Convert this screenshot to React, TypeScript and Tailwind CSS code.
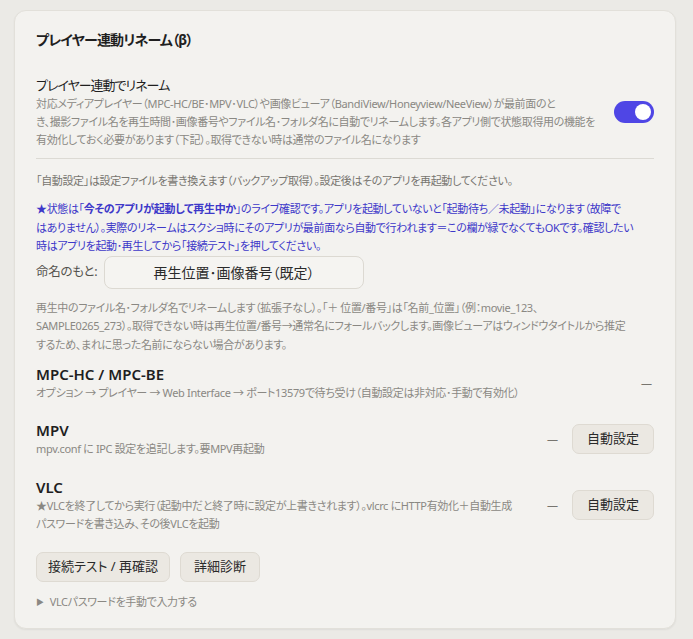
import React from "react";

const F = { fontFamily: '"Noto Sans", "Noto Sans CJK JP", sans-serif' };

function Btn({ children, className = "" }: { children: React.ReactNode; className?: string }) {
  return (
    <button
      className={`h-[30px] whitespace-nowrap rounded-[7px] border border-[#dedad2] bg-[#ebe8e2] px-0 text-[13px] text-[#2a2a2a] ${className}`}
    >
      {children}
    </button>
  );
}

function Lines({ lines, className }: { lines: React.ReactNode[]; className: string }) {
  return (
    <div className={className}>
      {lines.map((l, i) => (
        <div key={i} className="whitespace-nowrap">
          {l}
        </div>
      ))}
    </div>
  );
}

const small = "text-[11px] tracking-[-0.35px]";
const gray = `${small} leading-[18px] text-[#8a8883]`;

export default function App() {
  return (
    <div
      style={F}
      className="min-h-[639px] w-full bg-[#ebeae6] pl-[14px] pr-[17px] pt-[10px] pb-[11px] [font-feature-settings:'palt']"
    >
      <div className="rounded-[12px] border border-[#e2e0da] bg-[#f3f2ef] pl-[21px] pr-[21px] pt-[18px] pb-[17px] shadow-[0_1px_2px_rgba(0,0,0,0.06)]">
        <h2 className="text-[14px] font-bold leading-[22px] tracking-[-0.8px] text-[#1f1f1f]">
          プレイヤー連動リネーム（β）
        </h2>

        <div className="mt-[24px] flex items-center gap-4">
          <div className="min-w-0 flex-1">
            <div className="text-[13px] leading-[20px] tracking-[-1px] text-[#1f1f1f]">プレイヤー連動でリネーム</div>
            <Lines
              className={gray}
              lines={[
                "対応メディアプレイヤー（MPC-HC/BE･MPV･VLC）や画像ビューア（BandiView/Honeyview/NeeView）が最前面のと",
                "き、撮影ファイル名を再生時間･画像番号やファイル名･フォルダ名に自動でリネームします。各アプリ側で状態取得用の機能を",
                "有効化しておく必要があります（下記）。取得できない時は通常のファイル名になります",
              ]}
            />
          </div>
          <div className="flex h-[22px] w-[40px] shrink-0 items-center justify-end rounded-full bg-[#4f46e5] px-[3px]">
            <div className="h-[16px] w-[16px] rounded-full bg-white" />
          </div>
        </div>

        <div className="mt-[9px] h-px bg-[#dcdad4]" />

        <p className={`mt-[13px] ${small} leading-[18px] text-[#77756f]`}>
          「自動設定」は設定ファイルを書き換えます（バックアップ取得）。設定後はそのアプリを再起動してください。
        </p>
        <Lines
          className={`mt-[10px] ${small} leading-[18.5px] text-[#3d38c9]`}
          lines={[
            <>
              ★状態は「<b>今そのアプリが起動して再生中か</b>」のライブ確認です。アプリを起動していないと「起動待ち／未起動」になります（故障で
            </>,
            "はありません）。実際のリネームはスクショ時にそのアプリが最前面なら自動で行われます＝この欄が緑でなくてもOKです。確認したい",
            "時はアプリを起動･再生してから「接続テスト」を押してください。",
          ]}
        />

        <div className="mt-0 flex items-center">
          <span className="w-[68px] text-[12.5px] tracking-[-0.3px] text-[#55534e]">命名のもと:</span>
          <div className="flex h-[33px] w-[260px] items-center justify-center rounded-[8px] border border-[#dcd9d2] bg-[#f5f4f1] text-[14px] text-[#2a2a2a]">
            再生位置･画像番号（既定）
          </div>
        </div>

        <Lines
          className={`mt-[10px] ${small} leading-[18.5px] text-[#8a8883]`}
          lines={[
            "再生中のファイル名･フォルダ名でリネームします（拡張子なし）。「＋ 位置/番号」は「名前_位置」（例：movie_123、",
            "SAMPLE0265_273）。取得できない時は再生位置/番号→通常名にフォールバックします。画像ビューアはウィンドウタイトルから推定",
            "するため、まれに思った名前にならない場合があります。",
          ]}
        />

        <div className="mt-[10px] flex items-center gap-[14px]">
          <div className="min-w-0 flex-1">
            <div className="text-[15px] font-semibold leading-[20px] text-[#1f1f1f]">MPC-HC / MPC-BE</div>
            <div className={`${gray} whitespace-nowrap`}>
              オプション → プレイヤー → Web Interface → ポート13579で待ち受け（自動設定は非対応･手動で有効化）
            </div>
          </div>
          <span className="mr-[2px] text-[11px] text-[#77756f]">—</span>
        </div>

        <div className="mt-[18px] flex items-center gap-[14px]">
          <div className="min-w-0 flex-1">
            <div className="text-[15px] font-semibold leading-[20px] text-[#1f1f1f]">MPV</div>
            <div className={gray}>mpv.conf に IPC 設定を追記します。要MPV再起動</div>
          </div>
          <span className="text-[11px] text-[#77756f]">—</span>
          <Btn className="w-[82px]">自動設定</Btn>
        </div>

        <div className="mt-[19px] flex items-center gap-[14px]">
          <div className="min-w-0 flex-1">
            <div className="text-[15px] font-semibold leading-[20px] text-[#1f1f1f]">VLC</div>
            <Lines
              className={gray}
              lines={[
                "★VLCを終了してから実行（起動中だと終了時に設定が上書きされます）。vlcrc にHTTP有効化＋自動生成",
                "パスワードを書き込み、その後VLCを起動",
              ]}
            />
          </div>
          <span className="text-[11px] text-[#77756f]">—</span>
          <Btn className="w-[82px]">自動設定</Btn>
        </div>

        <div className="mt-[19px] flex gap-[10px]">
          <Btn className="w-[134px]">接続テスト / 再確認</Btn>
          <Btn className="w-[80px]">詳細診断</Btn>
        </div>

        <div className={`mt-[11px] flex items-center gap-[6px] ${small} leading-[18px] text-[#8a8883]`}>
          <span className="text-[8px]">▶</span>
          <span>VLCパスワードを手動で入力する</span>
        </div>
      </div>
    </div>
  );
}
